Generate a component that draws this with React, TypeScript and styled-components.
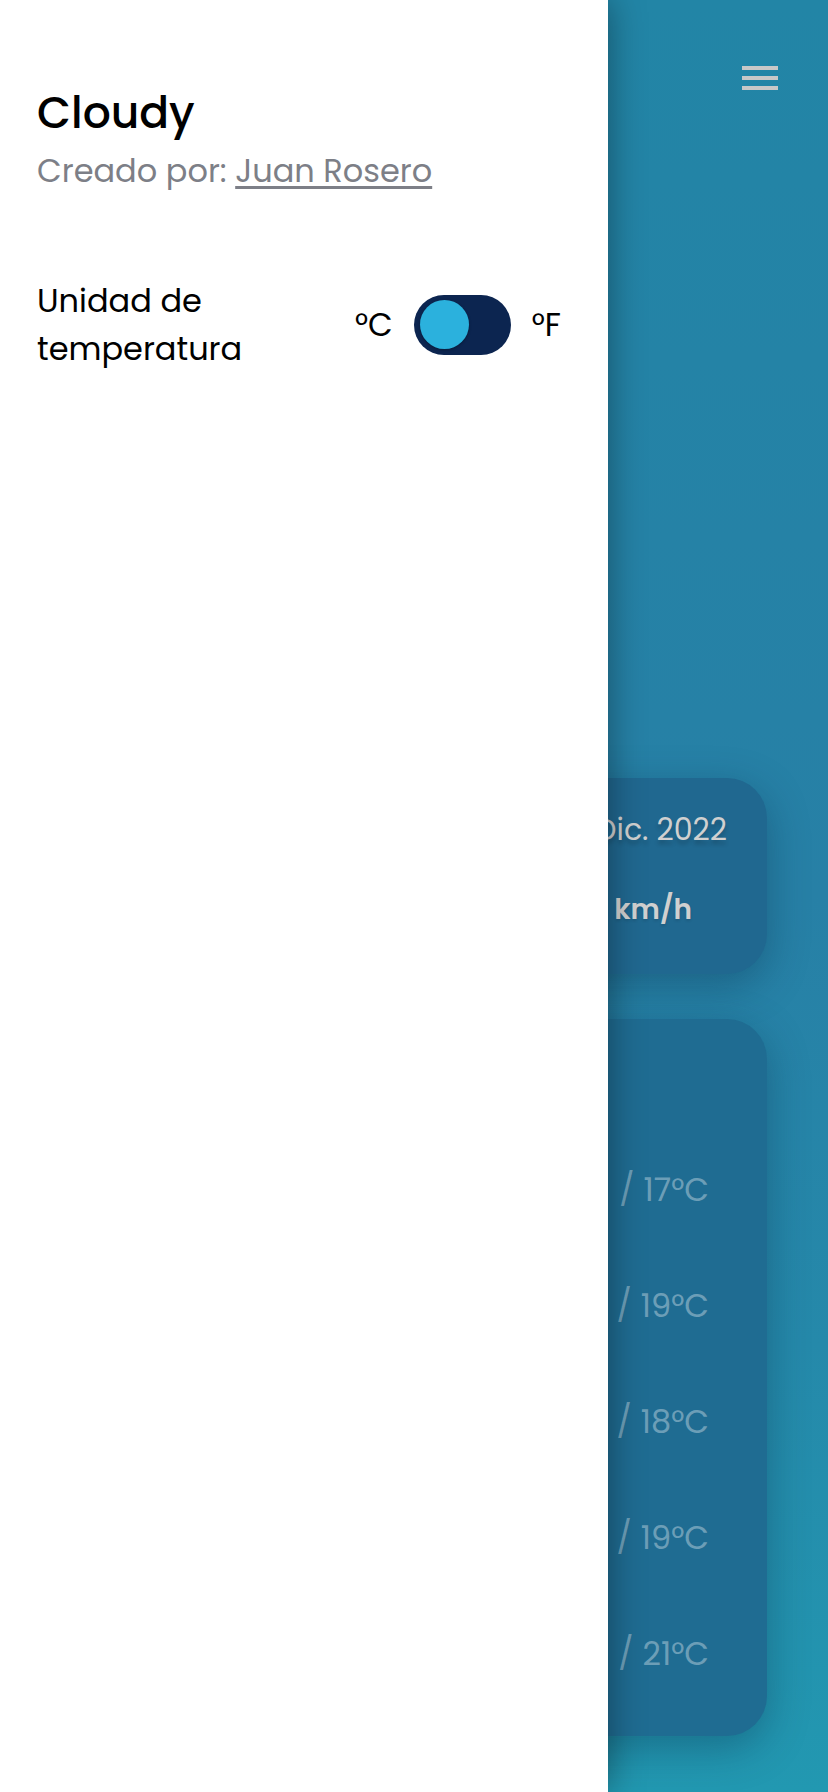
import React from "react";
import styled, { createGlobalStyle } from "styled-components";

const GlobalStyle = createGlobalStyle`
  html, body {
    margin: 0;
    padding: 0;
  }
  body {
    font-family: "Poppins", "DejaVu Sans", sans-serif;
    -webkit-font-smoothing: antialiased;
  }
  * {
    box-sizing: border-box;
  }
`;

const forecast = [
  { day: "Lunes", max: 24, min: 17 },
  { day: "Martes", max: 25, min: 19 },
  { day: "Miércoles", max: 23, min: 18 },
  { day: "Jueves", max: 26, min: 19 },
  { day: "Viernes", max: 27, min: 21 },
];

export default function App() {
  return (
    <>
      <GlobalStyle />
      <Page>
        <Header>
          <MenuButton aria-label="Menú">
            <Bar />
            <Bar />
            <Bar />
          </MenuButton>
        </Header>

        <Main>
          <Card>
            <DateLine>Sábado, 10 Dic. 2022</DateLine>
            <StatsLine>
              <Stat>82 %</Stat>
              <Stat>5 km/h</Stat>
            </StatsLine>
          </Card>

          <ForecastCard>
            <ForecastTitle>Próximos días</ForecastTitle>
            {forecast.map((item) => (
              <ForecastRow key={item.day}>
                <Day>{item.day}</Day>
                <Temps>
                  <Max>{item.max}°C</Max>
                  <span>/</span>
                  <span>{item.min}°C</span>
                </Temps>
              </ForecastRow>
            ))}
          </ForecastCard>
        </Main>

        <Drawer>
          <Title>Cloudy</Title>
          <Credit>
            Creado por: <CreditLink href="#">Juan Rosero</CreditLink>
          </Credit>

          <SettingRow>
            <SettingLabel>
              Unidad de
              <br />
              temperatura
            </SettingLabel>
            <UnitSwitch>
              <Unit>°C</Unit>
              <Track role="switch" aria-checked="false">
                <Thumb />
              </Track>
              <Unit>°F</Unit>
            </UnitSwitch>
          </SettingRow>
        </Drawer>
      </Page>
    </>
  );
}

const Page = styled.div`
  position: relative;
  min-height: 100vh;
  overflow: hidden;
  background: linear-gradient(
    180deg,
    #2285a6 0%,
    #2582a6 30%,
    #2780a6 50%,
    #2589aa 75%,
    #2298b1 100%
  );
`;

const Header = styled.header`
  display: flex;
  justify-content: flex-end;
  padding: 66px 50px 0 0;
`;

const MenuButton = styled.button`
  display: flex;
  flex-direction: column;
  gap: 6px;
  width: 36px;
  padding: 0;
  border: none;
  background: none;
  cursor: pointer;
`;

const Bar = styled.span`
  display: block;
  height: 4px;
  background: #c8c8c8;
`;

const Main = styled.main`
  display: flex;
  flex-direction: column;
  gap: 45px;
  padding: 688px 61px 0;
`;

const Card = styled.section`
  background: #206890;
  border-radius: 40px;
  box-shadow: 0 12px 40px rgba(10, 40, 70, 0.35);
  padding: 34px 40px 46px;
  color: #d0d0d0;
`;

const DateLine = styled.div`
  font-size: 30px;
  line-height: 36px;
  text-align: right;
  text-shadow: 0 4px 4px rgba(0, 0, 0, 0.2);
`;

const StatsLine = styled.div`
  display: flex;
  justify-content: space-between;
  margin-top: 44px;
  padding: 0 35px 0 60px;
`;

const Stat = styled.span`
  font-size: 28px;
  line-height: 36px;
  font-weight: 600;
  text-shadow: 0 2px 3px rgba(0, 0, 0, 0.12);
`;

const ForecastCard = styled(Card)`
  background: #1f6c92;
  padding: 24px 58px 24px 40px;
  color: rgba(255, 255, 255, 0.36);
`;

const ForecastTitle = styled.h2`
  margin: 0 0 49px;
  font-size: 30px;
  line-height: 40px;
  font-weight: 400;
`;

const ForecastRow = styled.div`
  display: flex;
  justify-content: space-between;
  align-items: center;
  height: 116px;
  font-size: 32px;
`;

const Day = styled.span``;

const Temps = styled.span`
  display: flex;
  gap: 9px;
  white-space: nowrap;
`;

const Max = styled.span`
  margin-right: 28px;
`;

const Drawer = styled.aside`
  position: absolute;
  top: 0;
  left: 0;
  bottom: 0;
  width: 608px;
  background: #ffffff;
  box-shadow: 0 0 34px rgba(0, 0, 0, 0.4);
  padding: 87px 47px 0 37px;
  color: #000;
`;

const Title = styled.h1`
  margin: 0;
  font-size: 44px;
  line-height: 1.2;
  font-weight: 500;
`;

const Credit = styled.p`
  margin: 7px 0 0;
  font-size: 32px;
  line-height: 48px;
  color: #7d7f87;
`;

const CreditLink = styled.a`
  color: inherit;
  text-decoration: underline;
  text-underline-offset: 4px;
`;

const SettingRow = styled.div`
  display: flex;
  justify-content: space-between;
  align-items: center;
  margin-top: 82px;
`;

const SettingLabel = styled.span`
  font-size: 32px;
  line-height: 48px;
`;

const UnitSwitch = styled.div`
  display: flex;
  align-items: center;
  gap: 21px;
`;

const Unit = styled.span`
  font-size: 32px;
  line-height: 48px;
`;

const Track = styled.div`
  display: flex;
  align-items: center;
  width: 97px;
  height: 60px;
  padding: 0 6px;
  border-radius: 30px;
  background: #0c2550;
`;

const Thumb = styled.span`
  width: 49px;
  height: 49px;
  border-radius: 50%;
  background: #2bb1dd;
  box-shadow: 0 1px 3px rgba(0, 0, 0, 0.3);
`;
